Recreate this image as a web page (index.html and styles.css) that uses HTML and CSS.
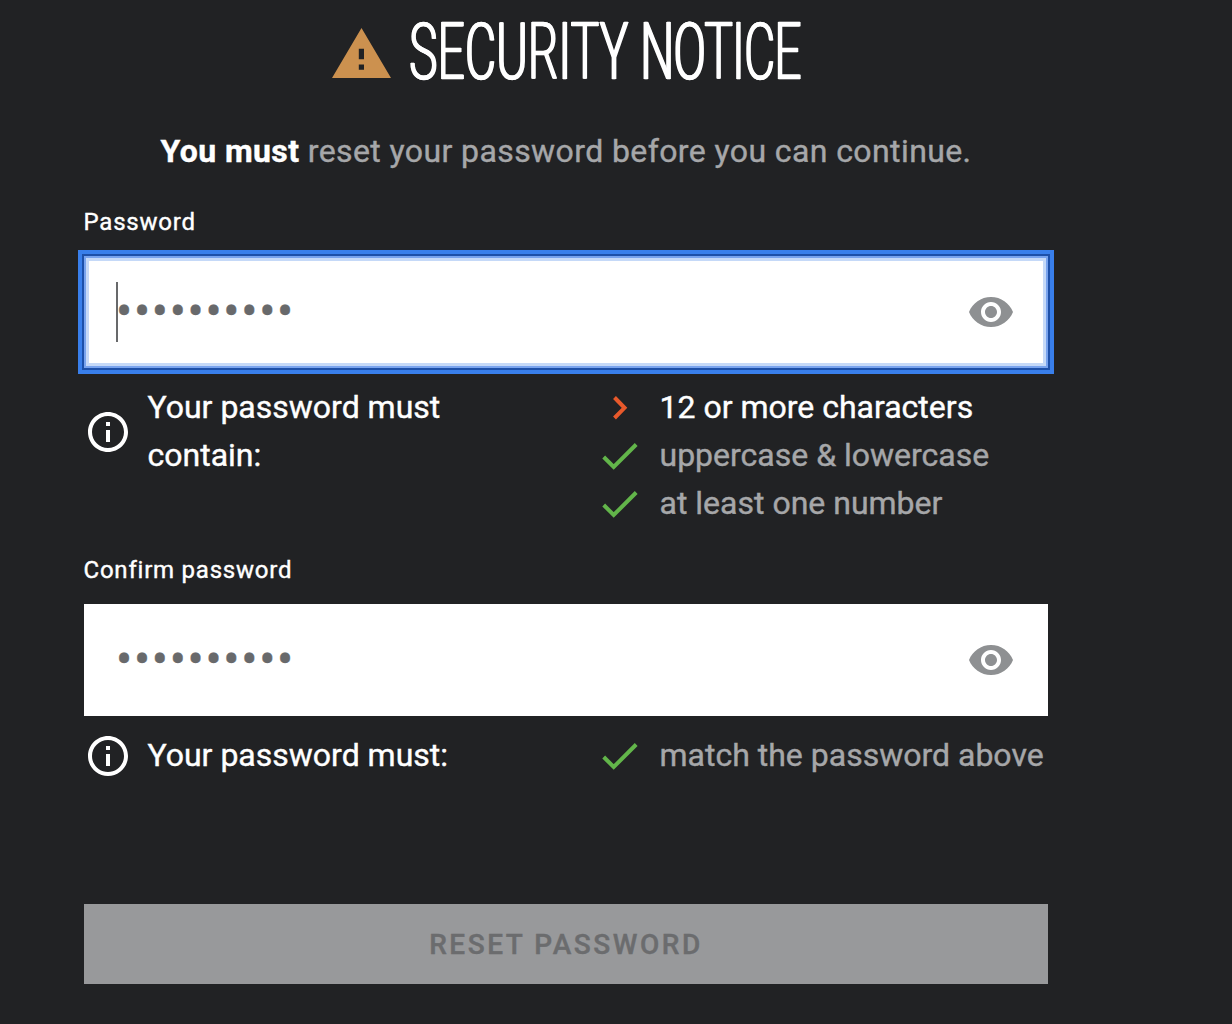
FILE: index.html
```html
<!DOCTYPE html>
<html lang="en">
<head>
    <meta charset="UTF-8">
    <meta name="viewport" content="width=device-width, initial-scale=1.0">
    <title>Security Notice</title>
    <link rel="stylesheet" href="styles.css">
</head>
<body>
    <form class="reset-form">
        <h1 class="title">
            <svg class="warning-icon" viewBox="0 0 59 51">
                <path fill="#cc914f" fill-rule="evenodd" d="M29.5 0L59 50H0ZM26.8 20.7v10.6h5.2V20.7ZM26.8 36.5v5.2h5.2V36.5Z"/>
            </svg>
            <span class="title-text">SECURITY <span class="tight">NOTICE</span></span>
        </h1>
        <p class="intro"><strong>You must</strong> reset your password before you can continue.</p>

        <label for="password">Password</label>
        <div class="field focused">
            <input type="text" id="password" placeholder="••••••••••">
            <span class="caret"></span>
            <svg class="eye" viewBox="1 4.5 22 15"><path d="M12 4.5C7 4.5 2.73 7.61 1 12c1.73 4.39 6 7.5 11 7.5s9.27-3.11 11-7.5c-1.73-4.39-6-7.5-11-7.5zM12 17c-2.76 0-5-2.24-5-5s2.24-5 5-5 5 2.24 5 5-2.24 5-5 5zm0-8c-1.66 0-3 1.34-3 3s1.34 3 3 3 3-1.34 3-3-1.34-3-3-3z"/></svg>
        </div>
        <div class="rules">
            <div class="hint">
                <svg class="info" viewBox="2 2 20 20"><path d="M11 7h2v2h-2zm0 4h2v6h-2zm1-9C6.48 2 2 6.48 2 12s4.48 10 10 10 10-4.48 10-10S17.52 2 12 2zm0 18c-4.41 0-8-3.59-8-8s3.59-8 8-8 8 3.59 8 8-3.59 8-8 8z"/></svg>
                <span>Your password must contain:</span>
            </div>
            <ul>
                <li class="current"><svg class="mark" viewBox="0 0 48 48"><path class="arrow" d="M14.5 14.5L24.5 24.8L14.5 35"/></svg>12 or more characters</li>
                <li><svg class="mark" viewBox="0 0 48 48"><path class="check" d="M3.7 26L13.7 36L36.2 13.5"/></svg>uppercase &amp; lowercase</li>
                <li><svg class="mark" viewBox="0 0 48 48"><path class="check" d="M3.7 26L13.7 36L36.2 13.5"/></svg>at least one number</li>
            </ul>
        </div>

        <label for="confirm">Confirm password</label>
        <div class="field">
            <input type="text" id="confirm" placeholder="••••••••••">
            <svg class="eye" viewBox="1 4.5 22 15"><path d="M12 4.5C7 4.5 2.73 7.61 1 12c1.73 4.39 6 7.5 11 7.5s9.27-3.11 11-7.5c-1.73-4.39-6-7.5-11-7.5zM12 17c-2.76 0-5-2.24-5-5s2.24-5 5-5 5 2.24 5 5-2.24 5-5 5zm0-8c-1.66 0-3 1.34-3 3s1.34 3 3 3 3-1.34 3-3-1.34-3-3-3z"/></svg>
        </div>
        <div class="rules confirm-rules">
            <div class="hint">
                <svg class="info" viewBox="2 2 20 20"><path d="M11 7h2v2h-2zm0 4h2v6h-2zm1-9C6.48 2 2 6.48 2 12s4.48 10 10 10 10-4.48 10-10S17.52 2 12 2zm0 18c-4.41 0-8-3.59-8-8s3.59-8 8-8 8 3.59 8 8-3.59 8-8 8z"/></svg>
                <span>Your password must:</span>
            </div>
            <ul>
                <li><svg class="mark" viewBox="0 0 48 48"><path class="check" d="M3.7 26L13.7 36L36.2 13.5"/></svg>match the password above</li>
            </ul>
        </div>

        <button type="submit" disabled>RESET PASSWORD</button>
    </form>
</body>
</html>
```
FILE: styles.css
```css
* {
    box-sizing: border-box;
}
body {
    margin: 0;
    background: #212224;
    color: #fff;
    font: 32px/48px Roboto, sans-serif;
    -webkit-text-stroke: 0.4px;
}
.reset-form {
    width: 964px;
    margin-left: 84px;
    padding-top: 12px;
}
.title {
    display: flex;
    height: 80px;
    margin: 0;
    padding-left: 248px;
}
.warning-icon {
    flex: none;
    width: 59px;
    height: 51px;
    margin: 16px 18px 0 0;
}
/* narrow caps, the shadows thicken the vertical stems */
.title-text {
    font-size: 79px;
    font-weight: 300;
    line-height: 80px;
    white-space: nowrap;
    transform: scaleX(0.609);
    transform-origin: 0 0;
    text-shadow: 1.3px 0 #fff, -1.3px 0 #fff;
}
.title-text .tight {
    letter-spacing: -1.6px;
}
.intro {
    margin: 35px 0 0;
    text-align: center;
    letter-spacing: 0.4px;
    color: #a6a7a9;
}
.intro strong {
    color: #fff;
}
label {
    display: block;
    margin-top: 31px;
    height: 50px;
    font-size: 24px;
    line-height: 32px;
    letter-spacing: 0.78px;
    text-indent: -0.5px;
}
.field {
    display: flex;
    align-items: center;
    position: relative;
    height: 112px;
    padding: 0 35px 0 32px;
    background: #fff;
}
.focused {
    outline: 4px solid #397feb;
    outline-offset: 2px;
    box-shadow: 0 0 0 2px #1d50a9, inset 0 0 0 2px #78a3ee, inset 0 0 0 5px #c5d9f8;
}
.field input {
    flex: 1;
    height: 60px;
    padding: 0 0 1px;
    border: 0;
    background: none;
    font: 48px/58px Roboto, sans-serif;
    letter-spacing: 1.7px;
}
.field input::placeholder {
    color: #68696b;
}
.caret {
    position: absolute;
    left: 32px;
    top: 26px;
    width: 2px;
    height: 60px;
    background: #68696b;
}
.eye {
    width: 44px;
    height: 30px;
    fill: #8e9092;
}
.rules {
    display: flex;
    height: 140px;
    margin-top: 15px;
}
.hint {
    display: flex;
    align-items: center;
    gap: 20px;
    width: 515.5px;
    height: 96px;
    padding-left: 3.5px;
}
.hint span {
    width: 340px;
}
.info {
    width: 40px;
    height: 40px;
    margin-top: 2px;
    fill: #fff;
}
.rules ul {
    margin: 0;
    padding: 0;
    list-style: none;
    color: #a6a7a9;
    white-space: nowrap;
}
.rules li {
    display: flex;
}
.rules .current {
    color: #fff;
}
.mark {
    width: 48px;
    height: 48px;
    margin-right: 12px;
    fill: none;
    stroke-width: 4;
}
.check {
    stroke: #62b54a;
}
.arrow {
    stroke: #e8592b;
}
.confirm-rules,
.confirm-rules .hint {
    height: 48px;
}
button {
    display: block;
    width: 100%;
    height: 80px;
    margin-top: 125px;
    padding: 0;
    border: 0;
    background: #98999b;
    color: #6b6c6e;
    font: 500 28px Roboto, sans-serif;
    letter-spacing: 2.55px;
    -webkit-text-stroke: 0.4px;
}
```
